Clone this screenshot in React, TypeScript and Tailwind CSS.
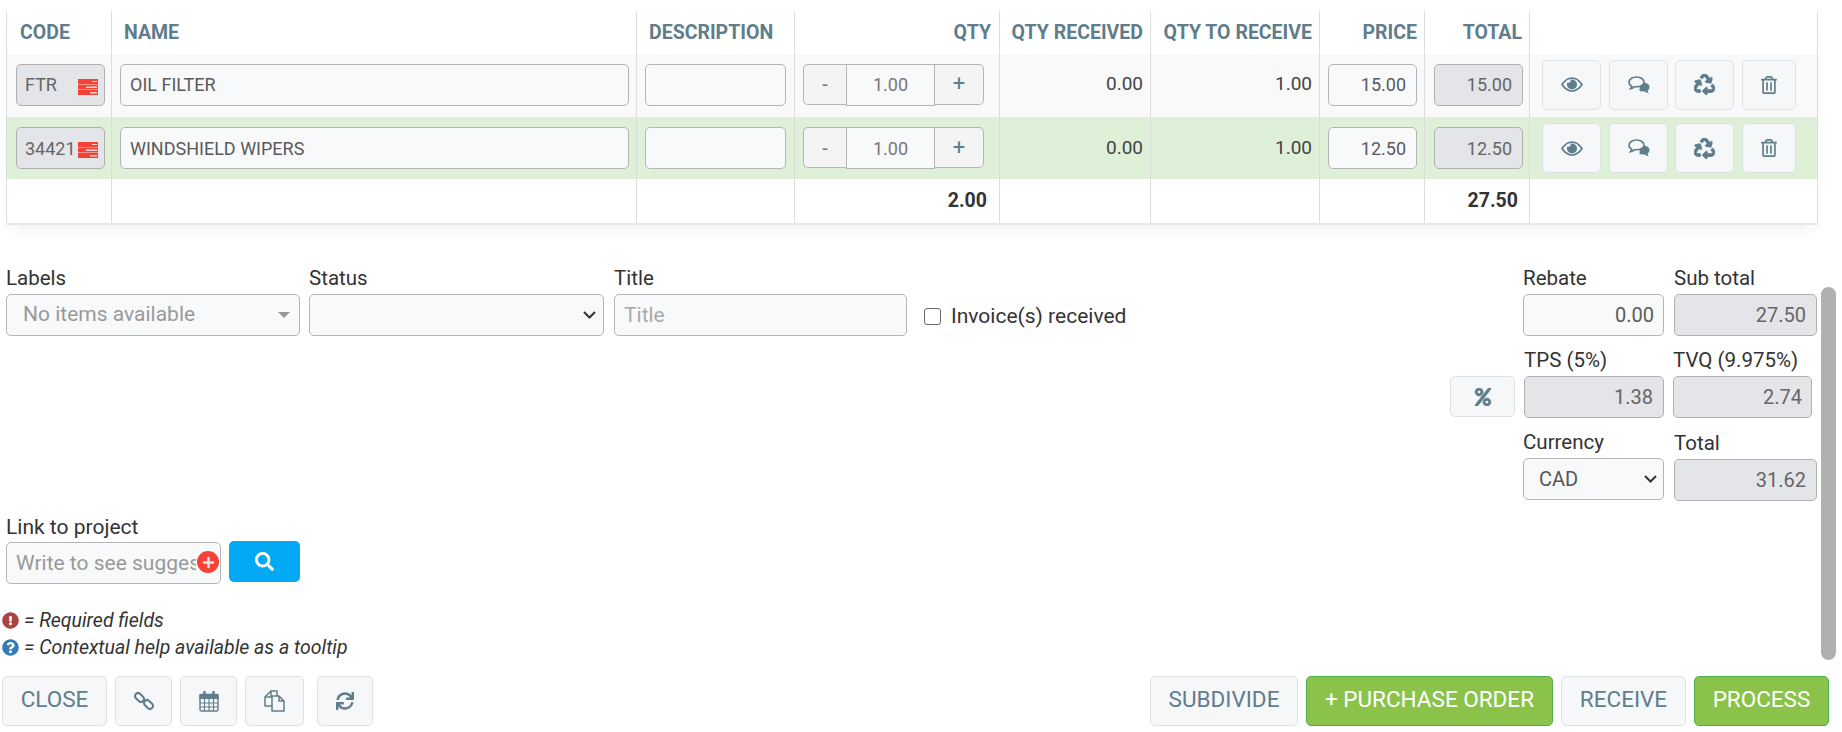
import { ReactNode } from "react";
import {
  FaRecycle,
  FaRegTrashAlt,
  FaSync,
  FaPercent,
  FaSearch,
  FaExclamationCircle,
  FaQuestionCircle,
  FaPlus,
} from "react-icons/fa";

const inputBase =
  "block h-[42px] rounded-[5px] border border-[#b5b5b5] bg-[#f8f9fb] text-[#5a5a5a] outline-none text-[18px]";
const readonlyBase =
  "block h-[42px] rounded-[5px] border border-[#b0b0b0] bg-[#e4e5e8] text-[#666] outline-none text-[18px]";
const btnBase =
  "flex items-center justify-center rounded-[5px] border border-[#dce2e6] bg-[#f5f7f9] text-[#607d8b]";

function TasksIcon() {
  return (
    <svg width="20" height="16" viewBox="0 0 20 16" className="block shrink-0">
      <rect x="0" y="0" width="20" height="5" fill="#f44336" />
      <rect x="0" y="5.5" width="20" height="5" fill="#f44336" />
      <rect x="0" y="11" width="20" height="5" fill="#f44336" />
      <rect x="14" y="2" width="5" height="1" fill="#f6d5d2" />
      <rect x="8" y="7.5" width="11" height="1.5" fill="#f6d5d2" />
      <rect x="12" y="13" width="7" height="1.5" fill="#f6d5d2" />
    </svg>
  );
}

function EyeIcon() {
  return (
    <svg width="22" height="15" viewBox="0 0 22 15">
      <path d="M1 7.5C4 3 7.5 1 11 1s7 2 10 6.5C18 12 14.5 14 11 14S4 12 1 7.5z" fill="none" stroke="#607d8b" strokeWidth="1.7" />
      <path d="M11 2.5a5 5 0 1 1-5 5c0-.8.2-1.5.5-2.2a2 2 0 0 0 3-2.4c.5-.3 1-.4 1.5-.4z" fill="#607d8b" />
    </svg>
  );
}

function CommentsIcon() {
  return (
    <svg width="22" height="18" viewBox="0 0 22 18">
      <path d="M12 6c5 0 9.5 1.500 9.500 5 0 1.800-1 3-2 3.600.2 1 .7 2 1.300 2.700-1.800-.2-3.300-.9-4.300-2-1.500.3-3.500.2-5-.3z" fill="#607d8b" />
      <path d="M8.500 1C4.300 1 1 3.300 1 6.200c0 1.700 1.100 3.100 2.800 4-.2.900-.7 1.700-1.300 2.400 1.700-.2 3.100-.9 4.200-1.900.6.100 1.200.1 1.800.1 4.200 0 7.500-2.200 7.500-4.600C16 3.300 12.700 1 8.500 1z" fill="#f5f7f9" stroke="#607d8b" strokeWidth="1.600" />
    </svg>
  );
}

function LinkIcon() {
  return (
    <svg width="20" height="20" viewBox="0 0 20 20" fill="none" stroke="#607d8b" strokeWidth="2">
      <rect x="0.5" y="3.500" width="10" height="6" rx="3" transform="rotate(45 5.500 6.500)" />
      <rect x="9.500" y="10.500" width="10" height="6" rx="3" transform="rotate(45 14.500 13.500)" />
    </svg>
  );
}

function CalendarIcon() {
  return (
    <svg width="20" height="21" viewBox="0 0 20 21" fill="none" stroke="#607d8b" strokeWidth="1.1">
      <rect x="1" y="3.500" width="18" height="16.500" rx="1.500" strokeWidth="1.400" />
      <rect x="1" y="3.500" width="18" height="4" fill="#607d8b" />
      <path d="M5.500 8v12M10 8v12M14.500 8v12M1 12h18M1 16h18" />
      <path d="M5.500 0.800v4M14.500 0.800v4" strokeWidth="2.400" strokeLinecap="round" />
    </svg>
  );
}

function FilesIcon() {
  return (
    <svg width="21" height="22" viewBox="0 0 21 22" fill="none" stroke="#607d8b" strokeWidth="1.500" strokeLinejoin="round">
      <path d="M13 6V1H7L1 7v9h7" />
      <path d="M7 1v6H1" />
      <path d="M8 6h7l5 5v10H8z" fill="#f5f7f9" />
      <path d="M15 6v5h5" />
    </svg>
  );
}

function SelectChevron() {
  return (
    <svg width="13" height="8" viewBox="0 0 13 8" fill="none" stroke="#333" strokeWidth="2">
      <path d="M1 1l5.500 5.500L12 1" />
    </svg>
  );
}

function Field({ label, children, className }: { label: string; children: ReactNode; className?: string }) {
  return (
    <div className={className}>
      <div className="h-[24px] text-[20.5px] leading-[16px] text-[#333]">{label}</div>
      {children}
    </div>
  );
}

function ActionButtons() {
  return (
    <div className="flex items-center pl-[12px]">
      <button className={`${btnBase} h-[50px] w-[59px]`}>
        <EyeIcon />
      </button>
      <button className={`${btnBase} ml-[8px] h-[50px] w-[59px]`}>
        <CommentsIcon />
      </button>
      <button className={`${btnBase} ml-[7px] h-[50px] w-[59px]`}>
        <FaRecycle size={21} stroke="currentColor" strokeWidth={24} />
      </button>
      <button className={`${btnBase} ml-[8px] h-[50px] w-[54px]`}>
        <FaRegTrashAlt size={18} />
      </button>
    </div>
  );
}

function QtyStepper() {
  return (
    <div className="flex items-start pl-[8px]">
      <button className="h-[41px] w-[43px] rounded-l-[5px] border border-r-0 border-[#b5b5b5] bg-[#f4f4f4] text-[20px] text-[#607d8b]">
        -
      </button>
      <input
        readOnly
        defaultValue="1.00"
        className="block h-[42px] w-[89px] border border-[#b5b5b5] bg-[#f8f9fb] text-center text-[18px] text-[#777] outline-none"
      />
      <button className="h-[41px] w-[49px] rounded-r-[5px] border border-l-0 border-[#b5b5b5] bg-[#f4f4f4] text-[22px] leading-none text-[#607d8b]">
        +
      </button>
    </div>
  );
}

const rows = [
  { code: "FTR", name: "OIL FILTER", price: "15.00", bg: "bg-[#f9f9f9]", h: "h-[63px]", pad: "pb-[2px]" },
  { code: "34421", name: "WINDSHIELD WIPERS", price: "12.50", bg: "bg-[#dff0d8]", h: "h-[62px]", pad: "" },
];

const th = "border-x border-[#ddd] text-[19.5px] font-bold text-[#607d8b] whitespace-nowrap";
const td = "border-x border-[#ddd] p-0";

export default function App() {
  return (
    <div
      className="relative h-[732px] overflow-hidden bg-white"
      style={{ fontFamily: "Roboto, sans-serif" }}
    >
      {/* Lines table */}
      <div className="ml-[6px] mt-[11px] w-[1811px] shadow-[0_10px_14px_-4px_rgba(0,0,0,0.05)]">
        <table className="w-[1811px] table-fixed border-collapse border-b-2 border-[#e4e8eb]">
          <colgroup>
            <col className="w-[105px]" />
            <col className="w-[525px]" />
            <col className="w-[158px]" />
            <col className="w-[205px]" />
            <col className="w-[151px]" />
            <col className="w-[169px]" />
            <col className="w-[105px]" />
            <col className="w-[105px]" />
            <col className="w-[288px]" />
          </colgroup>
          <thead>
            <tr className="h-[43px]">
              <th className={`${th} pl-[13px] text-left`}>CODE</th>
              <th className={`${th} pl-[12px] text-left`}>NAME</th>
              <th className={`${th} pl-[12px] text-left`}>DESCRIPTION</th>
              <th className={`${th} pr-[8px] text-right`}>QTY</th>
              <th className={`${th} pr-[7px] text-right`}>QTY RECEIVED</th>
              <th className={`${th} pr-[7px] text-right`}>QTY TO RECEIVE</th>
              <th className={`${th} pr-[7px] text-right`}>PRICE</th>
              <th className={`${th} pr-[7px] text-right`}>TOTAL</th>
              <th className={th}></th>
            </tr>
          </thead>
          <tbody>
            {rows.map((r) => (
              <tr key={r.code} className={`${r.bg} ${r.h}`}>
                <td className={`${td} ${r.pad}`}>
                  <div className="relative ml-[9px] w-[89px]">
                    <input readOnly defaultValue={r.code} className={`${readonlyBase} w-full pl-[8px]`} />
                    <span className="absolute right-[7px] top-[15px]">
                      <TasksIcon />
                    </span>
                  </div>
                </td>
                <td className={`${td} ${r.pad}`}>
                  <input
                    readOnly
                    defaultValue={r.name}
                    className={`${inputBase} ml-[8px] w-[509px] pl-[9px]`}
                  />
                </td>
                <td className={`${td} ${r.pad}`}>
                  <input readOnly className={`${inputBase} ml-[8px] w-[141px]`} />
                </td>
                <td className={`${td} ${r.pad}`}>
                  <QtyStepper />
                </td>
                <td className={`${td} ${r.pad} pr-[7px] text-right text-[19px] text-[#444]`}>0.00</td>
                <td className={`${td} ${r.pad} pr-[7px] text-right text-[19px] text-[#444]`}>1.00</td>
                <td className={`${td} ${r.pad}`}>
                  <input
                    readOnly
                    defaultValue={r.price}
                    className={`${inputBase} ml-[8px] w-[89px] pr-[10px] text-right`}
                  />
                </td>
                <td className={`${td} ${r.pad}`}>
                  <input
                    readOnly
                    defaultValue={r.price}
                    className={`${readonlyBase} ml-[9px] w-[89px] pr-[10px] text-right`}
                  />
                </td>
                <td className={`${td} ${r.pad}`}>
                  <ActionButtons />
                </td>
              </tr>
            ))}
            <tr className="h-[45px] bg-white text-[19.5px] font-bold text-[#333]">
              <td className={td}></td>
              <td className={td}></td>
              <td className={td}></td>
              <td className={`${td} pr-[12px] text-right`}>2.00</td>
              <td className={td}></td>
              <td className={td}></td>
              <td className={td}></td>
              <td className={`${td} pr-[11px] text-right`}>27.50</td>
              <td className={td}></td>
            </tr>
          </tbody>
        </table>
      </div>

      {/* Form area */}
      <div className="mt-[45px] flex h-[406px] justify-between pl-[6px] pr-[25px]">
        <div>
          <div className="flex items-start">
            <Field label="Labels">
              <div className="flex h-[42px] w-[294px] items-center justify-between rounded-[5px] border border-[#b5b5b5] bg-[#f8f9fb] pl-[16px] pr-[9px] text-[21px] text-[#999]">
                <span>No items available</span>
                <span className="h-0 w-0 border-x-[6px] border-t-[6px] border-x-transparent border-t-[#999]" />
              </div>
            </Field>
            <Field label="Status" className="ml-[9px]">
              <div className="flex h-[42px] w-[295px] items-center justify-end rounded-[5px] border border-[#b5b5b5] bg-[#f8f9fb] pr-[7px]">
                <SelectChevron />
              </div>
            </Field>
            <Field label="Title" className="ml-[10px]">
              <input
                placeholder="Title"
                className="block h-[42px] w-[293px] rounded-[5px] border border-[#b5b5b5] bg-[#f8f9fb] pl-[9px] text-[21px] text-[#555] outline-none placeholder:text-[#aaa]"
              />
            </Field>
            <label className="ml-[17px] mt-[35px] flex items-center text-[21px] leading-[22px] text-[#333]">
              <span className="h-[17px] w-[17px] rounded-[3px] border border-[#666] bg-white" />
              <span className="ml-[10px]">Invoice(s) received</span>
            </label>
          </div>

          <div className="mt-[179px] h-[27px] text-[21px] leading-[24px] text-[#333]">Link to project</div>
          <div className="flex items-start">
            <div className="relative h-[42px] w-[215px]">
              <input
                placeholder="Write to see suggestions"
                className="block h-[42px] w-[215px] rounded-[5px] border border-[#b5b5b5] bg-[#f8f9fb] pl-[9px] pr-[24px] text-[21px] text-[#555] outline-none placeholder:text-[#999]"
              />
              <span className="absolute left-[191px] top-[9px] flex h-[22px] w-[22px] items-center justify-center rounded-full bg-[#f44336] text-[#e6e6e6]">
                <FaPlus size={13} />
              </span>
            </div>
            <button className="ml-[8px] mt-[-1px] flex h-[41px] w-[71px] items-center justify-center rounded-[5px] bg-[#03a9f4] text-white">
              <FaSearch size={19} />
            </button>
          </div>

          <div className="ml-[-4px] mt-[23px] text-[19.5px] italic leading-[27px] text-[#333]">
            <div className="flex items-center">
              <FaExclamationCircle size={17} className="text-[#a94442]" />
              <span className="ml-[5px]">= Required fields</span>
            </div>
            <div className="flex items-center">
              <FaQuestionCircle size={17} className="text-[#337ab7]" />
              <span className="ml-[5px]">= Contextual help available as a tooltip</span>
            </div>
          </div>
        </div>

        {/* Totals */}
        <div className="w-[367px]">
          <div className="flex pl-[73px]">
            <Field label="Rebate">
              <input readOnly defaultValue="0.00" className={`${inputBase} w-[141px] pr-[9px] text-right text-[20px]`} />
            </Field>
            <Field label="Sub total" className="ml-[10px]">
              <input readOnly defaultValue="27.50" className={`${readonlyBase} w-[143px] pr-[10px] text-right text-[20px]`} />
            </Field>
          </div>
          <div className="mt-[16px] flex items-end">
            <button className={`${btnBase} mb-[1px] h-[41px] w-[65px]`}>
              <FaPercent size={18} stroke="currentColor" strokeWidth={24} />
            </button>
            <Field label="TPS (5%)" className="ml-[9px]">
              <input readOnly defaultValue="1.38" className={`${readonlyBase} w-[140px] pr-[10px] text-right text-[20px]`} />
            </Field>
            <Field label="TVQ (9.975%)" className="ml-[9px]">
              <input readOnly defaultValue="2.74" className={`${readonlyBase} w-[139px] pr-[9px] text-right text-[20px]`} />
            </Field>
          </div>
          <div className="mt-[16px] flex pl-[73px]">
            <Field label="Currency">
              <div className="flex h-[42px] w-[141px] items-center justify-between rounded-[5px] border border-[#b5b5b5] bg-[#f8f9fb] pl-[15px] pr-[6px] text-[20px] text-[#555]">
                <span>CAD</span>
                <SelectChevron />
              </div>
            </Field>
            <Field label="Total" className="ml-[10px] mt-[1px]">
              <input readOnly defaultValue="31.62" className={`${readonlyBase} w-[143px] pr-[10px] text-right text-[20px]`} />
            </Field>
          </div>
        </div>
      </div>

      {/* Footer buttons */}
      <div className="flex h-[50px] justify-between pl-[2px] pr-[13px] text-[22.5px]">
        <div className="flex">
          <button className={`${btnBase} h-[50px] w-[105px] pb-[2px]`}>CLOSE</button>
          <button className={`${btnBase} ml-[8px] h-[50px] w-[57px]`}>
            <LinkIcon />
          </button>
          <button className={`${btnBase} ml-[8px] h-[50px] w-[57px]`}>
            <CalendarIcon />
          </button>
          <button className={`${btnBase} ml-[8px] h-[50px] w-[59px]`}>
            <FilesIcon />
          </button>
          <button className={`${btnBase} ml-[13px] h-[50px] w-[56px]`}>
            <FaSync size={18} />
          </button>
        </div>
        <div className="flex">
          <button className={`${btnBase} h-[50px] w-[148px] pb-[2px]`}>SUBDIVIDE</button>
          <button className="ml-[8px] h-[50px] w-[247px] rounded-[5px] border border-[#4caf50] bg-[#8bc34a] pb-[2px] text-white">
            + PURCHASE ORDER
          </button>
          <button className={`${btnBase} ml-[8px] h-[50px] w-[125px] pb-[2px]`}>RECEIVE</button>
          <button className="ml-[8px] h-[50px] w-[135px] rounded-[5px] border border-[#4caf50] bg-[#8bc34a] pb-[2px] text-white">
            PROCESS
          </button>
        </div>
      </div>

      {/* Scrollbar thumb overlay */}
      <div className="absolute left-[1821px] top-[287px] h-[373px] w-[15px] rounded-[8px] bg-[#b0b0b0]" />
    </div>
  );
}
